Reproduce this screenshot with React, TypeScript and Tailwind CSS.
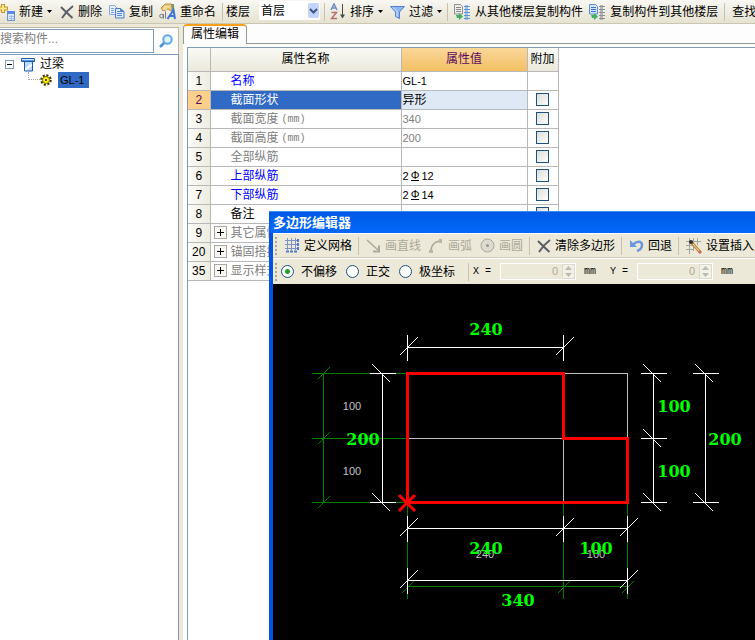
import React, { useState } from 'react';

type IconProps = { className?: string };

const NewIcon = () => (
    <svg width="15" height="18" viewBox="0 0 15 18" className="shrink-0" aria-hidden="true">
        <rect x="7.5" y="8.5" width="7" height="9" fill="#dbe8fb" stroke="#6c92d0" />
        <rect x="7" y="8" width="8" height="3" fill="#5d8ae0" />
        <path d="M9 13.5h5M9 15.5h5M11.5 12v5" stroke="#a5bde6" />
        <path d="M3 1v9M-1 5.5h9" stroke="#c9962c" strokeWidth="4" />
        <path d="M3 2v7M-1 5.5h8" stroke="#ffe888" strokeWidth="2" />
    </svg>
);

const CrossIcon = () => (
    <svg width="14" height="14" viewBox="0 0 14 14" className="shrink-0" aria-hidden="true">
        <path d="M1 2C4 5 8 9 12.500 13M13 1C9 4 5 8.500 2 13" fill="none" stroke="#5b5f67" strokeWidth="2" />
    </svg>
);

const CopyIcon = () => (
    <svg width="16" height="15" viewBox="0 0 16 15" className="shrink-0" aria-hidden="true">
        <path d="M.5 1.500h5l3 3v6h-8z" fill="#e6f0ff" stroke="#89a9df" />
        <path d="M2 4.500h3M2 6.500h3M2 8.500h3" stroke="#7fa2e6" />
        <path d="M6.500 4.500h5l3.500 3v6.500h-8.500z" fill="#dceaff" stroke="#4f7cc9" />
        <path d="M8 7.500h3M8 9.500h5M8 11.500h5" stroke="#5987df" />
        <path d="M11.500 4.500v3h3.500" fill="#5987df" stroke="#4f7cc9" />
    </svg>
);

const RenameIcon = () => (
    <svg width="17" height="17" viewBox="0 0 17 17" className="shrink-0" aria-hidden="true">
        <path d="M2 5l4-4h6l3 2-3 5-3-2-5 2z" fill="#e8c878" stroke="#b8954e" />
        <path d="M5 4h6M4 6h4" stroke="#fff0b8" />
        <path d="M12 1h3v5l-2 2z" fill="#7b9a6a" />
        <circle cx="2.500" cy="13" r="1.800" fill="none" stroke="#777b84" />
        <path d="M4.500 11v4.500M6.500 8.500v7" stroke="#777b84" />
        <path d="M8.500 16l6-9 1.500 9M11 13h5" fill="none" stroke="#3d75d8" strokeWidth="2" />
    </svg>
);

const SortIcon = () => (
    <svg width="16" height="17" viewBox="0 0 16 17" className="shrink-0" aria-hidden="true">
        <path d="M1 7l3-6 3 6M2 5h4" fill="none" stroke="#6b8cc4" strokeWidth="1.500" />
        <path d="M1.500 9.500h5l-5 6h5.500" fill="none" stroke="#b56f6f" strokeWidth="1.500" />
        <path d="M12.500 1v13" stroke="#4a4a4a" />
        <path d="M10 11.500h5l-2.500 4z" fill="#4a4a4a" />
    </svg>
);

const FunnelIcon = () => (
    <svg width="15" height="14" viewBox="0 0 15 14" className="shrink-0" aria-hidden="true">
        <path d="M.5 1.500h14L9.500 7v6.500l-4-2V7z" fill="#8eb4f2" stroke="#557fca" />
        <path d="M3 2.500l4 4v5" fill="none" stroke="#d6e6ff" />
    </svg>
);

const FloorCopyIcon = ({ active = false }: { active?: boolean }) => (
    <svg width="17" height="17" viewBox="0 0 17 17" className="shrink-0" aria-hidden="true">
        <path d="M.5 1.500h6l2 2v7.500h-8z" fill={active ? '#d5e5ff' : '#ececec'} stroke={active ? '#5f8edb' : '#929292'} />
        <path d="M2 4.500h5M2 6.500h5M2 8.500h5" stroke={active ? '#3d73d0' : '#8a8a8a'} />
        <path d="M2 12h3v-2l4 3.500L5 17v-2H3z" fill="#3fb15e" />
        <path d="M12.500 2v15" stroke={active ? '#b2b5ba' : '#9dc0ee'} strokeWidth="3" />
        <path d="M10 3.500h6M10 6.500h6M10 9.500h6M10 12.500h6M10 15.500h6" stroke={active ? '#8b8f95' : '#5f93da'} />
    </svg>
);

const GridIcon = () => (
    <svg width="15" height="15" viewBox="0 0 15 15" className="shrink-0" aria-hidden="true">
        <path d="M2.500 0v12M6.500 0v12M10.500 0v12M0 2.500h12M0 6.500h12M0 10.500h12" stroke="#7d93c1" />
        <path d="M13 1v3M13 5v3M13 9v3" stroke="#5379cc" strokeWidth="2" />
        <path d="M1 13.500h3M5 13.500h3M9 13.500h3" stroke="#5379cc" strokeWidth="2" />
    </svg>
);

const LineIcon = () => (
    <svg width="15" height="14" viewBox="0 0 15 14" className="shrink-0" aria-hidden="true">
        <path d="M1 1l11 10" stroke="#aaa99d" strokeWidth="1.500" />
        <path d="M13 6.500v6H7" fill="none" stroke="#aaa99d" strokeWidth="2" />
    </svg>
);

const ArcIcon = () => (
    <svg width="15" height="14" viewBox="0 0 15 14" className="shrink-0" aria-hidden="true">
        <path d="M2 12C2 6 6 2 12 2" fill="none" stroke="#aaa99d" strokeWidth="1.500" />
        <path d="M0 11h4v3H0zM10 0h3v4h-3z" fill="#b8b7aa" />
    </svg>
);

const CircleIcon = () => (
    <svg width="15" height="15" viewBox="0 0 15 15" className="shrink-0" aria-hidden="true">
        <circle cx="7.500" cy="7.500" r="6.500" fill="#dddbcf" stroke="#aaa99d" />
        <circle cx="7.500" cy="7.500" r="1.500" fill="#99988d" />
    </svg>
);

const UndoIcon = () => (
    <svg width="14" height="13" viewBox="0 0 14 13" className="shrink-0" aria-hidden="true">
        <path d="M3 5.500C8 1 12 2.500 12 6c0 3-2 5-5 6" fill="none" stroke="#6b98de" strokeWidth="2.500" />
        <path d="M0 1v7h7z" fill="#6b98de" />
    </svg>
);

const InsertPointIcon = () => (
    <svg width="16" height="16" viewBox="0 0 16 16" className="shrink-0" aria-hidden="true">
        <path d="M3.500 0v16M7.500 0v13M11.500 0v7M0 3.500h15M0 7.500h10M0 11.500h8" stroke="#a4a49f" />
        <path d="M6 5l8 9" stroke="#b9893c" strokeWidth="3" />
        <path d="M7 6l6 7" stroke="#f4dc94" />
        <path d="M13 13l2 2" stroke="#d06a5a" strokeWidth="3" />
        <circle cx="5" cy="4" r="2" fill="#2e2e2e" />
    </svg>
);

const SearchIcon = () => (
    <svg width="14" height="14" viewBox="0 0 14 14" aria-hidden="true">
        <circle cx="8.500" cy="5.500" r="4.200" fill="#dff1ff" stroke="#5fa9e8" strokeWidth="2" />
        <path d="M5 9l-4 4" stroke="#4b90d8" strokeWidth="2.500" />
    </svg>
);

const BeamIcon = () => (
    <svg width="15" height="15" viewBox="0 0 15 15" className="shrink-0" aria-hidden="true">
        <path d="M3.500 4.500h8v9.500h-8z" fill="#b9dafc" stroke="#1d57a8" />
        <path d="M4 12.500C7 12 8 8 11 8" fill="none" stroke="#fff" strokeWidth="2" />
        <path d="M.5 1.500h13v3H.5z" fill="#d9ecff" stroke="#1d57a8" />
        <path d="M1 3.500h12" stroke="#5b96e0" />
    </svg>
);

const GearIcon = () => (
    <svg width="12" height="12" viewBox="0 0 12 12" className="shrink-0" aria-hidden="true">
        <circle cx="6" cy="6" r="4.500" fill="none" stroke="#3b3500" strokeWidth="2.500" strokeDasharray="2 1.500" />
        <circle cx="6" cy="6" r="3.500" fill="#ffee00" stroke="#8a7c00" />
        <circle cx="6" cy="6" r="1" fill="#222" />
    </svg>
);

const Caret = ({ className = '' }: IconProps) => (
    <svg width="5" height="3" viewBox="0 0 5 3" className={`shrink-0 ${className}`} aria-hidden="true">
        <path d="M0 0h5L2.500 3z" fill="#000" />
    </svg>
);

const Separator = ({ className = '' }: IconProps) => (
    <span className={`w-px h-[18px] bg-[#c5c2b0] shrink-0 ${className}`} />
);

const ToolButton = ({ icon, label, caret, disabled, className = '' }: {
    icon?: React.ReactNode;
    label: string;
    caret?: boolean;
    disabled?: boolean;
    className?: string;
}) => (
    <button disabled={disabled} className={`flex items-center gap-1 shrink-0 whitespace-nowrap disabled:text-[#aca899] ${className}`}>
        {icon}
        <span>{label}</span>
        {caret && <Caret />}
    </button>
);

const rows = [
    { no: 1, name: '名称', tone: 'blue', value: 'GL-1', check: false },
    { no: 2, name: '截面形状', tone: 'selected', value: '异形', check: true },
    { no: 3, name: '截面宽度(mm)', tone: 'gray', value: '340', check: true },
    { no: 4, name: '截面高度(mm)', tone: 'gray', value: '200', check: true },
    { no: 5, name: '全部纵筋', tone: 'gray', value: '', check: true },
    { no: 6, name: '上部纵筋', tone: 'blue', value: '2Φ12', check: true },
    { no: 7, name: '下部纵筋', tone: 'blue', value: '2Φ14', check: true },
    { no: 8, name: '备注', tone: 'black', value: '', check: true },
    { no: 9, name: '其它属性', tone: 'group', value: '', check: false },
    { no: 20, name: '锚固搭接', tone: 'group', value: '', check: false },
    { no: 35, name: '显示样式', tone: 'group', value: '', check: false },
];

const nameTone: Record<string, string> = {
    blue: 'text-[#0000ff]',
    selected: 'bg-[#316ac5] text-white',
    gray: 'text-[#808080]',
    black: 'text-black',
    group: 'text-[#808080]',
};

// Rebar grade mark is a phi standing on a base line
const CellValue = ({ value }: { value: string }) => {
    const [count, size] = value.split('Φ');
    if (!size) return <>{value}</>;
    return (
        <span className="flex items-center gap-[2px]">
            {count}
            <span className="border-b border-black leading-[9px]">Φ</span>
            {size}
        </span>
    );
};

const PropertyTable = () => (
    <table className="w-[370px] table-fixed border-collapse">
        <colgroup>
            <col className="w-[22px]" />
            <col className="w-[191px]" />
            <col className="w-[126px]" />
            <col className="w-[31px]" />
        </colgroup>
        <thead>
            <tr className="h-[23px] bg-linear-to-b from-[#fafaf6] to-[#ebe9da]">
                <th className="border-r border-b border-[#b8b8b8]" aria-label="序号" />
                <th className="border-r border-b border-[#b8b8b8] font-normal">属性名称</th>
                <th className="border-r border-b border-[#b8b8b8] bg-linear-to-b from-[#fad699] to-[#f2bf62] font-normal text-[#5c0a5c]">属性值</th>
                <th className="border-r border-b border-[#b8b8b8] font-normal whitespace-nowrap">附加</th>
            </tr>
        </thead>
        <tbody>
            {rows.map((row) => (
                <tr key={row.no} className="h-[19px]">
                    <td className={`border-r border-b border-[#b8b8b8] text-center text-xs leading-4 ${row.tone === 'selected' ? 'bg-[#fcd08a] text-[#5c0a5c]' : 'bg-linear-to-r from-[#fbfbf8] to-[#eeecdf]'}`}>{row.no}</td>
                    <td className={`border-r border-b border-[#b8b8b8] leading-4 ${nameTone[row.tone]}`}>
                        <div className="flex items-center">
                            <span className="w-5 flex justify-center shrink-0">
                                {row.tone === 'group' && (
                                    <button aria-label={`展开${row.name}`} className="w-[13px] h-[13px] border border-[#a8a8a8] bg-[#f8f7f2] flex items-center justify-center">
                                        <svg width="7" height="7" viewBox="0 0 7 7" aria-hidden="true">
                                            <path d="M3.500 0v7M0 3.500h7" stroke="#000" />
                                        </svg>
                                    </button>
                                )}
                            </span>
                            <span className="whitespace-nowrap">{row.name.replace('(mm)', '')}</span>
                            {row.name.includes('(mm)') && <span className="font-['Liberation_Mono',monospace] text-[10px] pl-[3px] pt-[2px] leading-[14px]">(mm)</span>}
                        </div>
                    </td>
                    <td className={`border-r border-b border-[#b8b8b8] pl-px leading-4 ${row.value === '异形' ? 'bg-[#dfe9f6] text-xs' : 'text-[11px]'} ${row.tone === 'gray' ? 'text-[#808080]' : ''}`}>
                        <CellValue value={row.value} />
                    </td>
                    <td className="border-r border-b border-[#b8b8b8]">
                        {row.check && (
                            <input type="checkbox" aria-label={`附加${row.name}`} className="block mx-auto appearance-none w-[13px] h-[13px] border border-[#1c5180] bg-linear-to-br from-[#dcdcd7] to-white checked:bg-[#21a121]" />
                        )}
                    </td>
                </tr>
            ))}
        </tbody>
    </table>
);

type DimProps = { at: number; stops: number[] };

// Horizontal dimension line with a slash at every stop
const HDim = ({ at, stops }: DimProps) => (
    <g stroke="#fff">
        <path d={`M${stops[0]} ${at}H${stops[stops.length - 1]}`} />
        {stops.map((x) => (
            <path key={x} d={`M${x} ${at - 13}v26M${x - 8} ${at + 8}l18 -18`} />
        ))}
    </g>
);

const VDim = ({ at, stops }: DimProps) => (
    <g stroke="#fff">
        <path d={`M${at} ${stops[0]}V${stops[stops.length - 1]}`} />
        {stops.map((y) => (
            <path key={y} d={`M${at - 13} ${y}h26M${at - 10} ${y - 9}l18 18`} />
        ))}
    </g>
);

const dimLabels = [
    { x: 213, y: 51, text: '240' },
    { x: 90, y: 161, text: '200' },
    { x: 401, y: 128, text: '100' },
    { x: 401, y: 193, text: '100' },
    { x: 452, y: 161, text: '200' },
    { x: 213, y: 270, text: '240' },
    { x: 323, y: 270, text: '100' },
    { x: 245, y: 322, text: '340' },
];

const gridLabels = [
    { x: 79, y: 126, text: '100' },
    { x: 79, y: 191, text: '100' },
    { x: 212, y: 274, text: '240' },
    { x: 323, y: 274, text: '100' },
];

const SectionDrawing = () => (
    <svg width="482" height="356" viewBox="0 0 482 356" fill="none" className="block" role="img" aria-label="截面多边形">
        <g shapeRendering="crispEdges" transform="translate(.5 .5)">
            <g stroke="#008000">
                <path d="M38 89H134M38 154H134M38 218H134M50 89V218" />
                <path d="M134 218V314M290 218V314M354 218V314M134 302H354" />
                {[89, 154, 218].map((y) => <path key={y} d={`M44 ${y + 6}l12 -12`} />)}
                {[134, 290, 354].map((x) => <path key={x} d={`M${x - 6} 309l12 -12`} />)}
            </g>
            <path d="M134 89H354V218M134 154H354M290 89V218" stroke="#c0c0c0" />
            <HDim at={63} stops={[134, 290]} />
            <HDim at={244} stops={[134, 290, 354]} />
            <HDim at={296} stops={[134, 354]} />
            <VDim at={109} stops={[89, 218]} />
            <VDim at={380} stops={[89, 154, 218]} />
            <VDim at={432} stops={[89, 218]} />
            <path d="M134 89H290V154H354V218H134Z" stroke="#ff0000" strokeWidth="3" />
        </g>
        <path d="M126 211l16 16M142 211l-16 16" stroke="#ff0000" strokeWidth="3" />
        <g fill="#c0c0c0" textAnchor="middle" className="font-['Liberation_Sans',sans-serif] text-[11px]">
            {gridLabels.map((l) => <text key={`${l.x}-${l.y}`} x={l.x} y={l.y}>{l.text}</text>)}
        </g>
        <g fill="#00ff00" textAnchor="middle" className="font-['DejaVu_Serif',serif] text-[16px] font-bold">
            {dimLabels.map((l) => <text key={`${l.x}-${l.y}`} x={l.x} y={l.y}>{l.text}</text>)}
        </g>
    </svg>
);

const Grip = () => (
    <span className="flex flex-col gap-[2px] shrink-0 ml-[2px]">
        {[0, 1, 2, 3, 4].map((i) => <i key={i} className="w-[2px] h-[2px] bg-[#a9a695]" />)}
    </span>
);

const OffsetField = ({ axis }: { axis: string }) => (
    <label className="flex items-center shrink-0 font-['Liberation_Mono',monospace] text-[10px]">
        <span className="w-[27px] whitespace-pre">{axis} =</span>
        <span className="flex h-[17px] w-[76px] border border-white bg-[#ece9d8]">
            <input type="text" defaultValue="0" disabled className="flex-1 min-w-0 text-right pr-1 text-[11px] font-['Liberation_Sans',sans-serif] text-[#aca899]" />
            <span className="w-[13px] bg-[#f2f1e8] border border-[#dddacb] flex flex-col items-center justify-center gap-[3px]">
                <svg width="7" height="4" viewBox="0 0 7 4" aria-hidden="true"><path d="M0 4h7L3.500 0z" fill="#bdbbae" /></svg>
                <svg width="7" height="4" viewBox="0 0 7 4" aria-hidden="true"><path d="M0 0h7L3.500 4z" fill="#bdbbae" /></svg>
            </span>
        </span>
        <span className="pl-2">mm</span>
    </label>
);

const PolygonEditor = () => {
    const [mode, setMode] = useState('不偏移');

    return (
        <section className="absolute left-[269px] top-[211px] right-0 bottom-0 overflow-hidden flex flex-col bg-[#0054e3]">
            <header className="h-[22px] shrink-0 pl-1 pt-px flex items-center border-t border-[#3c8cf5] bg-linear-to-b from-[#0058e6] via-[#0062f0] to-[#0668fb]">
                <h2 className="font-bold text-white text-[13px] leading-4">多边形编辑器</h2>
            </header>
            <div className="ml-1 flex-1 flex flex-col bg-black overflow-hidden">
                <div className="h-[25px] shrink-0 flex items-center bg-[#ece9d8] border-t border-white border-b border-b-[#cfccba]">
                    <Grip />
                    <ToolButton icon={<GridIcon />} label="定义网格" className="ml-2" />
                    <Separator className="mx-[6px]" />
                    <ToolButton icon={<LineIcon />} label="画直线" disabled className="ml-px" />
                    <ToolButton icon={<ArcIcon />} label="画弧" disabled className="ml-2" />
                    <ToolButton icon={<CircleIcon />} label="画圆" disabled className="ml-2" />
                    <Separator className="mx-[6px]" />
                    <ToolButton icon={<CrossIcon />} label="清除多边形" className="ml-px" />
                    <Separator className="ml-[6px] mr-[7px]" />
                    <ToolButton icon={<UndoIcon />} label="回退" className="ml-px" />
                    <Separator className="ml-[6px] mr-[7px]" />
                    <ToolButton icon={<InsertPointIcon />} label="设置插入点" />
                </div>
                <div className="h-[26px] shrink-0 flex items-center bg-[#ece9d8] border-t border-white">
                    <Grip />
                    <div className="flex items-center gap-[9px] ml-1">
                        {['不偏移', '正交', '极坐标'].map((item) => (
                            <label key={item} className="flex items-center gap-[7px] whitespace-nowrap">
                                <input
                                    type="radio"
                                    name="mode"
                                    checked={mode === item}
                                    onChange={() => setMode(item)}
                                    className="appearance-none w-[13px] h-[13px] rounded-full border border-[#1c5180] bg-white checked:bg-[radial-gradient(circle,#21a121_0,#21a121_2px,#ffffff_3px)]"
                                />
                                {item}
                            </label>
                        ))}
                    </div>
                    <Separator className="ml-[13px] mr-1" />
                    <OffsetField axis="X" />
                    <span className="w-[14px] shrink-0" />
                    <OffsetField axis="Y" />
                </div>
                <SectionDrawing />
            </div>
        </section>
    );
};

const App = () => {
    const [floor, setFloor] = useState('首层');

    return (
        <div className="relative min-h-screen flex flex-col overflow-hidden bg-[#ece9d8] text-black text-xs font-['Liberation_Sans','Noto_Sans_CJK_SC',sans-serif]">
            {/* Main toolbar */}
            <nav className="h-6 shrink-0 flex items-center overflow-hidden bg-linear-to-b from-[#f8f7f2] to-[#e6e3d1] border-b border-[#c9c6b4]">
                <ToolButton icon={<NewIcon />} label="新建" caret />
                <ToolButton icon={<CrossIcon />} label="删除" className="ml-2" />
                <ToolButton icon={<CopyIcon />} label="复制" className="ml-[7px]" />
                <ToolButton icon={<RenameIcon />} label="重命名" className="ml-[6px]" />
                <Separator className="ml-[6px] mr-[3px]" />
                <label htmlFor="floor" className="shrink-0">楼层</label>
                <span className="relative shrink-0 ml-[9px] mb-[2px]">
                    <select id="floor" value={floor} onChange={(e) => setFloor(e.target.value)} className="block appearance-none w-[61px] h-[19px] bg-white pl-[2px] leading-4">
                        <option>首层</option>
                        <option>第2层</option>
                    </select>
                    <span className="absolute right-px top-[2px] w-[11px] h-[15px] rounded-xs bg-[#c4d5fb] flex items-center justify-center pointer-events-none">
                        <svg width="9" height="6" viewBox="0 0 9 6" aria-hidden="true"><path d="M1 1l3.500 3.500L8 1" fill="none" stroke="#3f5786" strokeWidth="2" /></svg>
                    </span>
                </span>
                <Separator className="ml-1 mr-[5px]" />
                <ToolButton icon={<SortIcon />} label="排序" caret />
                <ToolButton icon={<FunnelIcon />} label="过滤" caret className="ml-[7px]" />
                <Separator className="ml-[5px] mr-[6px]" />
                <ToolButton icon={<FloorCopyIcon />} label="从其他楼层复制构件" />
                <ToolButton icon={<FloorCopyIcon active />} label="复制构件到其他楼层" className="ml-[6px]" />
                <Separator className="ml-[6px] mr-[7px]" />
                <ToolButton label="查找" />
            </nav>

            <div className="flex-1 flex">
                {/* Component tree */}
                <aside className="w-[179px] shrink-0 flex flex-col pt-[3px]">
                    <div className="flex h-[27px] bg-[#fcfcfa] border-t border-r border-[#b9b6a4]">
                        <input type="text" placeholder="搜索构件..." aria-label="搜索构件" className="w-[154px] my-px h-6 bg-white border border-l-0 border-[#7f9db9] placeholder:text-[#808080] pb-1" />
                        <button aria-label="搜索" className="flex-1 flex items-center justify-center">
                            <SearchIcon />
                        </button>
                    </div>
                    <ul className="flex-1 bg-white border-t border-r border-[#7f9db9] pt-px pl-[5px]">
                        <li>
                            <div className="flex items-center h-4">
                                <button aria-label="折叠" className="w-[9px] h-[9px] border border-[#7f9db9] flex items-center justify-center">
                                    <svg width="5" height="1" viewBox="0 0 5 1" aria-hidden="true"><path d="M0 .5h5" stroke="#000" /></svg>
                                </button>
                                <span className="pl-[7px]"><BeamIcon /></span>
                                <span className="pl-1">过梁</span>
                            </div>
                            <ul>
                                <li className="flex items-center h-4 pl-[23px]">
                                    <span className="w-3 h-2 mb-2 border-l border-b border-dotted border-[#a0a0a0]" />
                                    <GearIcon />
                                    <span className="ml-[6px] px-[2px] bg-[#316ac5] w-[31px] text-[11px] leading-4">GL-1</span>
                                </li>
                            </ul>
                        </li>
                    </ul>
                </aside>

                {/* Property editor */}
                <main className="flex-1 min-w-0 flex flex-col ml-1 bg-[#fdfdfd]">
                    <div className="flex h-5">
                        <h1 className="w-16 shrink-0 text-center border-t-2 border-t-[#f9a01b] border-x border-x-[#919b9c] rounded-t-sm leading-4">属性编辑</h1>
                        <span className="flex-1 border-b border-[#919b9c]" />
                    </div>
                    <div className="flex-1 mt-[3px] ml-1 border-t border-l border-[#7f9db9] bg-white">
                        <PropertyTable />
                    </div>
                </main>
            </div>

            <PolygonEditor />
        </div>
    );
};

export default App;
